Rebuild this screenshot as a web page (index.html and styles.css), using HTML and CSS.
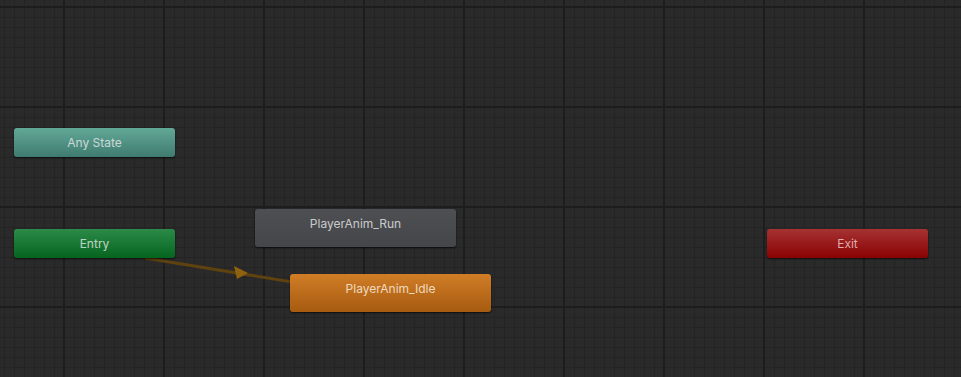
FILE: index.html
```html
<!DOCTYPE html><html lang="en">
<head>
    <meta charset="UTF-8">
    <meta name="viewport" content="width=device-width, initial-scale=1.0">
    <title>Animator</title>
    <link rel="stylesheet" href="styles.css">
</head>
<body><div class="graph">
    <!-- transitions -->
    <svg class="links" width="961" height="377">
        <line x1="145" y1="258" x2="292" y2="282" stroke="#5e420f" stroke-width="3"/>
        <polygon points="234,266 248,273 237,279" fill="#8f6210"/>
    </svg>

    <div class="node any" style="left:14px; top:128px;">Any State</div>
    <div class="node entry" style="left:14px; top:229px;">Entry</div>
    <div class="node state" style="left:255px; top:209px;">PlayerAnim_Run</div>
    <div class="node state default" style="left:290px; top:274px;">PlayerAnim_Idle</div>
    <div class="node exit" style="left:767px; top:229px;">Exit</div>
</div></body>
</html>
```

FILE: styles.css
```css
html, body {margin: 0; padding: 0; background: #282828;}
body {font-family: Inter, "Noto Sans", sans-serif;}
.graph {position: relative; width: 961px; height: 377px; overflow: hidden; background-color: #2a2a2a;
    background-image:
        linear-gradient(to right, #1d1d1d 2px, transparent 2px),
        linear-gradient(to bottom, #1d1d1d 2px, transparent 2px),
        linear-gradient(to right, #242424 1px, transparent 1px),
        linear-gradient(to bottom, #242424 1px, transparent 1px);
    background-size: 100px 100px, 100px 100px, 10px 10px, 10px 10px;
    background-position: 63px 6px, 63px 6px, 4px 7px, 4px 7px;}
.links {position: absolute; left: 0; top: 0;}
.node {position: absolute; width: 161px; height: 29px; line-height: 29px; box-sizing: border-box; text-align: center; font-size: 12px; color: rgba(235,235,235,0.8); border-radius: 3px; box-shadow: 0 1px 2px rgba(0,0,0,0.7);}
.any {background: linear-gradient(#62a897, #3f7b70);}
.entry {background: linear-gradient(#2c8a48, #05651f);}
.exit {background: linear-gradient(#a63232, #8a0202); color: rgba(240,200,200,0.85);}
.state {width: 201px; height: 38px; line-height: 30px; background: linear-gradient(#4e4f53, #45464a);}
.default {background: linear-gradient(#d17d27, #a65b0f); color: rgba(245,230,215,0.9);}
```
